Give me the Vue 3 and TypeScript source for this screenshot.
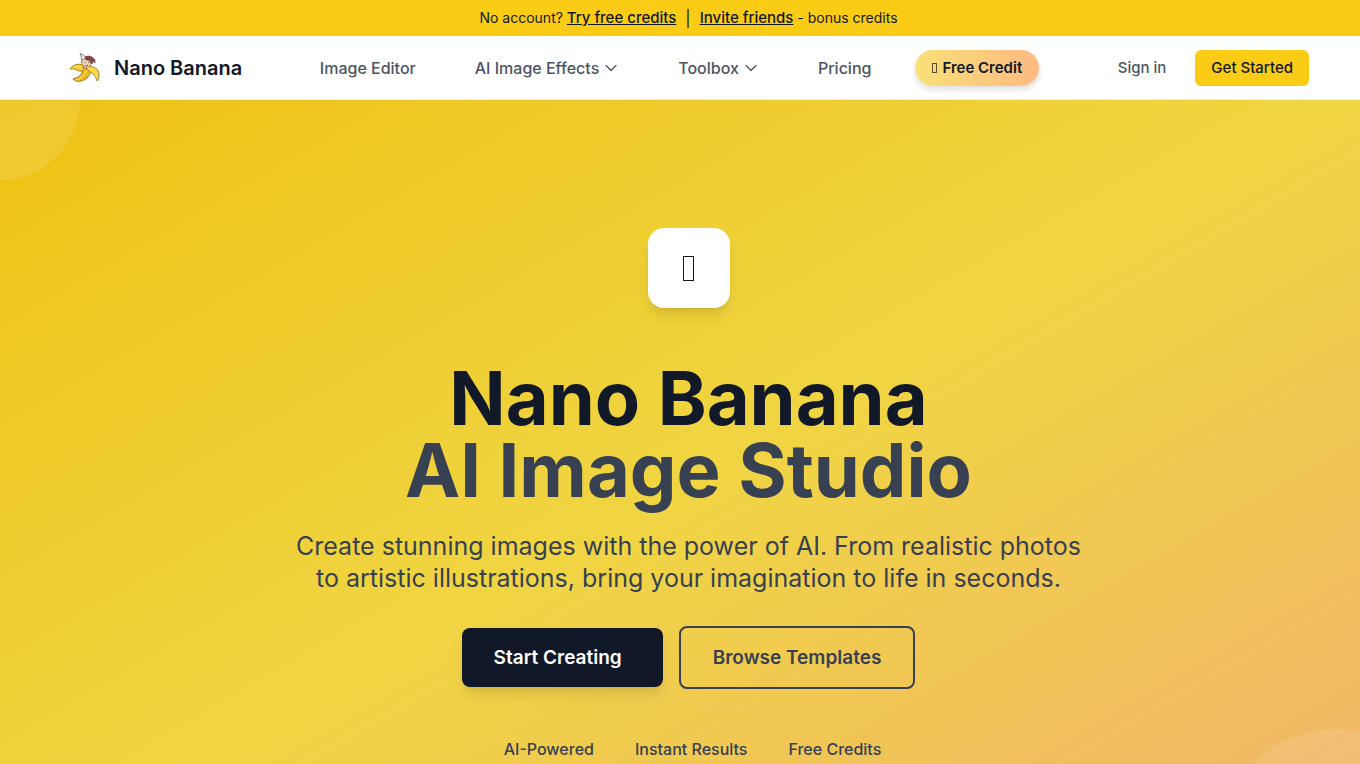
<script setup lang="ts">
interface NavItem {
  label: string
  menu: boolean
}

const navItems: NavItem[] = [
  { label: 'Image Editor', menu: false },
  { label: 'AI Image Effects', menu: true },
  { label: 'Toolbox', menu: true },
  { label: 'Pricing', menu: false },
]

const features: string[] = ['AI-Powered', 'Instant Results', 'Free Credits']
</script>

<template>
  <div class="page">
    <div class="promo">
      <span>No account? <a href="#">Try free credits</a></span>
      <span class="bar">|</span>
      <span><a href="#">Invite friends</a> - bonus credits</span>
    </div>

    <header class="header">
      <a class="brand" href="#">
        <svg class="logo" viewBox="0 0 32 32" aria-hidden="true">
          <path d="M12 1.500 Q15 2 18 5.500 L20 9 L14 11 Q14 5 12 1.500Z" fill="#f3eee5" stroke="#6d6868" stroke-width=".8" />
          <path d="M14 8 Q18 5 22 9 L23 15 L19 18 L14 15Z" fill="#f4d5bd" stroke="#786158" stroke-width=".7" />
          <path d="M17 5 Q20 3 24 5 Q28 7 27 11 L25 9 L24 12 L21 8 L18 8Z" fill="#8b4540" stroke="#573638" stroke-width=".6" />
          <path d="M16.500 10.500h1M20 10.500h1M17 13.500q2 1 3-.5" fill="none" stroke="#58413b" stroke-width=".9" />
          <path d="M15 13 Q7 10 2 17 Q6 16 11 19 Q14 20 17 18Z" fill="#f8c929" stroke="#80651e" stroke-width=".7" />
          <path d="M15 15 Q16 24 5 27 Q10 32 18 27 Q23 23 23 16 L19 17Z" fill="#f5b51e" stroke="#745e26" stroke-width=".7" />
          <path d="M22 14 Q32 16 31 24 Q31 28 29 29 Q28 24 25 22 Q20 19 18 16Z" fill="#fbd33b" stroke="#80651e" stroke-width=".7" />
          <path d="M6 15.500Q10 13 15 17M8 28Q16 26 19 18M22 17Q29 18 29 26" fill="none" stroke="#ffe477" stroke-width="1" />
        </svg>
        <span>Nano Banana</span>
      </a>

      <nav class="nav" aria-label="Main">
        <template v-for="item in navItems" :key="item.label">
          <button v-if="item.menu" class="nav-link" type="button">
            {{ item.label }}
            <svg class="chevron" viewBox="0 0 16 16" aria-hidden="true">
              <path d="M3 5.500 8 10.500l5-5" fill="none" stroke="currentColor" stroke-width="1.300" stroke-linecap="round" stroke-linejoin="round" />
            </svg>
          </button>
          <a v-else class="nav-link" href="#">{{ item.label }}</a>
        </template>
        <a class="pill" href="#"><i class="pill-mark"></i>Free Credit</a>
      </nav>

      <div class="actions">
        <button class="sign-in" type="button">Sign in</button>
        <button class="get-started" type="button">Get Started</button>
      </div>
    </header>

    <main class="hero">
      <div class="orb orb-start"></div>
      <div class="orb orb-end"></div>
      <div class="badge"><i class="badge-mark"></i></div>
      <h1>Nano Banana<span>AI Image Studio</span></h1>
      <p>Create stunning images with the power of AI. From realistic photos to artistic illustrations, bring your imagination to life in seconds.</p>
      <div class="cta">
        <button class="primary" type="button">Start Creating</button>
        <button class="secondary" type="button">Browse Templates</button>
      </div>
      <ul class="features">
        <li v-for="feature in features" :key="feature">{{ feature }}</li>
      </ul>
    </main>
  </div>
</template>

<style>
html {
  scrollbar-width: none;
}
</style>

<style scoped>
.page {
  min-height: 100vh;
  background: #fff;
  color: #111827;
  font-family: Inter, "Liberation Sans", sans-serif;
  font-size: 16px;
  line-height: 24px;
}
.page * {
  box-sizing: border-box;
}
a {
  color: inherit;
  text-decoration: none;
}
button {
  border: 0;
  background: none;
  color: inherit;
  font: inherit;
  cursor: pointer;
}
.promo {
  display: flex;
  justify-content: center;
  gap: 9px;
  padding: 8px 0 8px 17px;
  background: #facc15;
  font-size: 14px;
  line-height: 20px;
}
.promo a {
  font-size: 15px;
  font-weight: 500;
  text-decoration: underline;
}
.bar {
  font-size: 16px;
}
.header {
  display: flex;
  align-items: center;
  justify-content: space-between;
  height: 64px;
  padding: 0 51px 0 68px;
  border-bottom: 1px solid #fef0cd;
  white-space: nowrap;
}
.brand {
  display: flex;
  align-items: center;
  gap: 14px;
  font-size: 20px;
  font-weight: 600;
  line-height: 28px;
}
.logo {
  width: 32px;
  height: 32px;
}
.nav {
  display: flex;
  align-items: center;
  gap: 29px;
  color: #4b5563;
}
.nav-link {
  display: flex;
  align-items: center;
  gap: 4px;
  padding: 0 15px;
  font-weight: 500;
}
.chevron {
  width: 16px;
  height: 16px;
}
.pill {
  display: flex;
  align-items: center;
  gap: 5px;
  padding: 8px 17px;
  border-radius: 18px;
  background: linear-gradient(to right, #fae078, #fdba82);
  box-shadow: 0 4px 6px rgb(0 0 0 / 12%);
  color: #111827;
  font-size: 15px;
  font-weight: 600;
  line-height: 20px;
}
.pill-mark {
  width: 5px;
  height: 10px;
  border: 1px solid #5c4f2c;
}
.actions {
  display: flex;
  align-items: center;
  gap: 13px;
  font-size: 15px;
  font-weight: 500;
  line-height: 20px;
}
.sign-in {
  padding: 8px 16px;
  color: #4b5563;
}
.get-started {
  padding: 8px 16px;
  border-radius: 6px;
  background: #facc15;
}
.hero {
  position: relative;
  display: flex;
  flex-direction: column;
  align-items: center;
  padding: 128px 0 128px 17px;
  overflow: hidden;
  background: linear-gradient(to bottom right, #eec214, #f0d543, #f0b16e);
  text-align: center;
}
.orb {
  position: absolute;
  border-radius: 50%;
  background: rgb(255 255 255 / 10%);
}
.orb-start {
  top: -80px;
  left: -80px;
  width: 160px;
  height: 160px;
}
.orb-end {
  right: -97px;
  bottom: -80px;
  width: 240px;
  height: 240px;
}
.badge {
  display: flex;
  align-items: center;
  justify-content: center;
  width: 82px;
  height: 80px;
  margin-bottom: 54px;
  border-radius: 16px;
  background: #fff;
  box-shadow: 0 10px 15px -3px rgb(0 0 0 / 10%), 0 4px 6px -4px rgb(0 0 0 / 10%);
}
.badge-mark {
  width: 11px;
  height: 25px;
  border: 1px solid #111827;
}
h1 {
  margin: 0 0 24px;
  font-size: 74px;
  font-weight: 700;
  line-height: 72px;
}
h1 span {
  display: block;
  color: #374151;
}
p {
  max-width: 800px;
  margin: 0 0 32px;
  color: #374151;
  font-size: 25px;
  line-height: 32px;
}
.cta {
  display: flex;
  align-items: center;
  gap: 16px;
  margin-bottom: 48px;
  font-size: 19px;
  font-weight: 600;
  line-height: 27px;
}
.cta button {
  border-radius: 8px;
}
.primary {
  padding: 16px 41px 16px 32px;
  background: #111827;
  box-shadow: 0 10px 15px -3px rgb(0 0 0 / 10%), 0 4px 6px -4px rgb(0 0 0 / 10%);
  color: #fff;
}
.secondary {
  padding: 16px 32px;
  border: 2px solid #374151;
  color: #374151;
}
.features {
  display: flex;
  gap: 33px;
  margin: 0;
  padding: 0;
  color: #374151;
  font-weight: 500;
  list-style: none;
}
.features li {
  padding-left: 8px;
}
</style>
